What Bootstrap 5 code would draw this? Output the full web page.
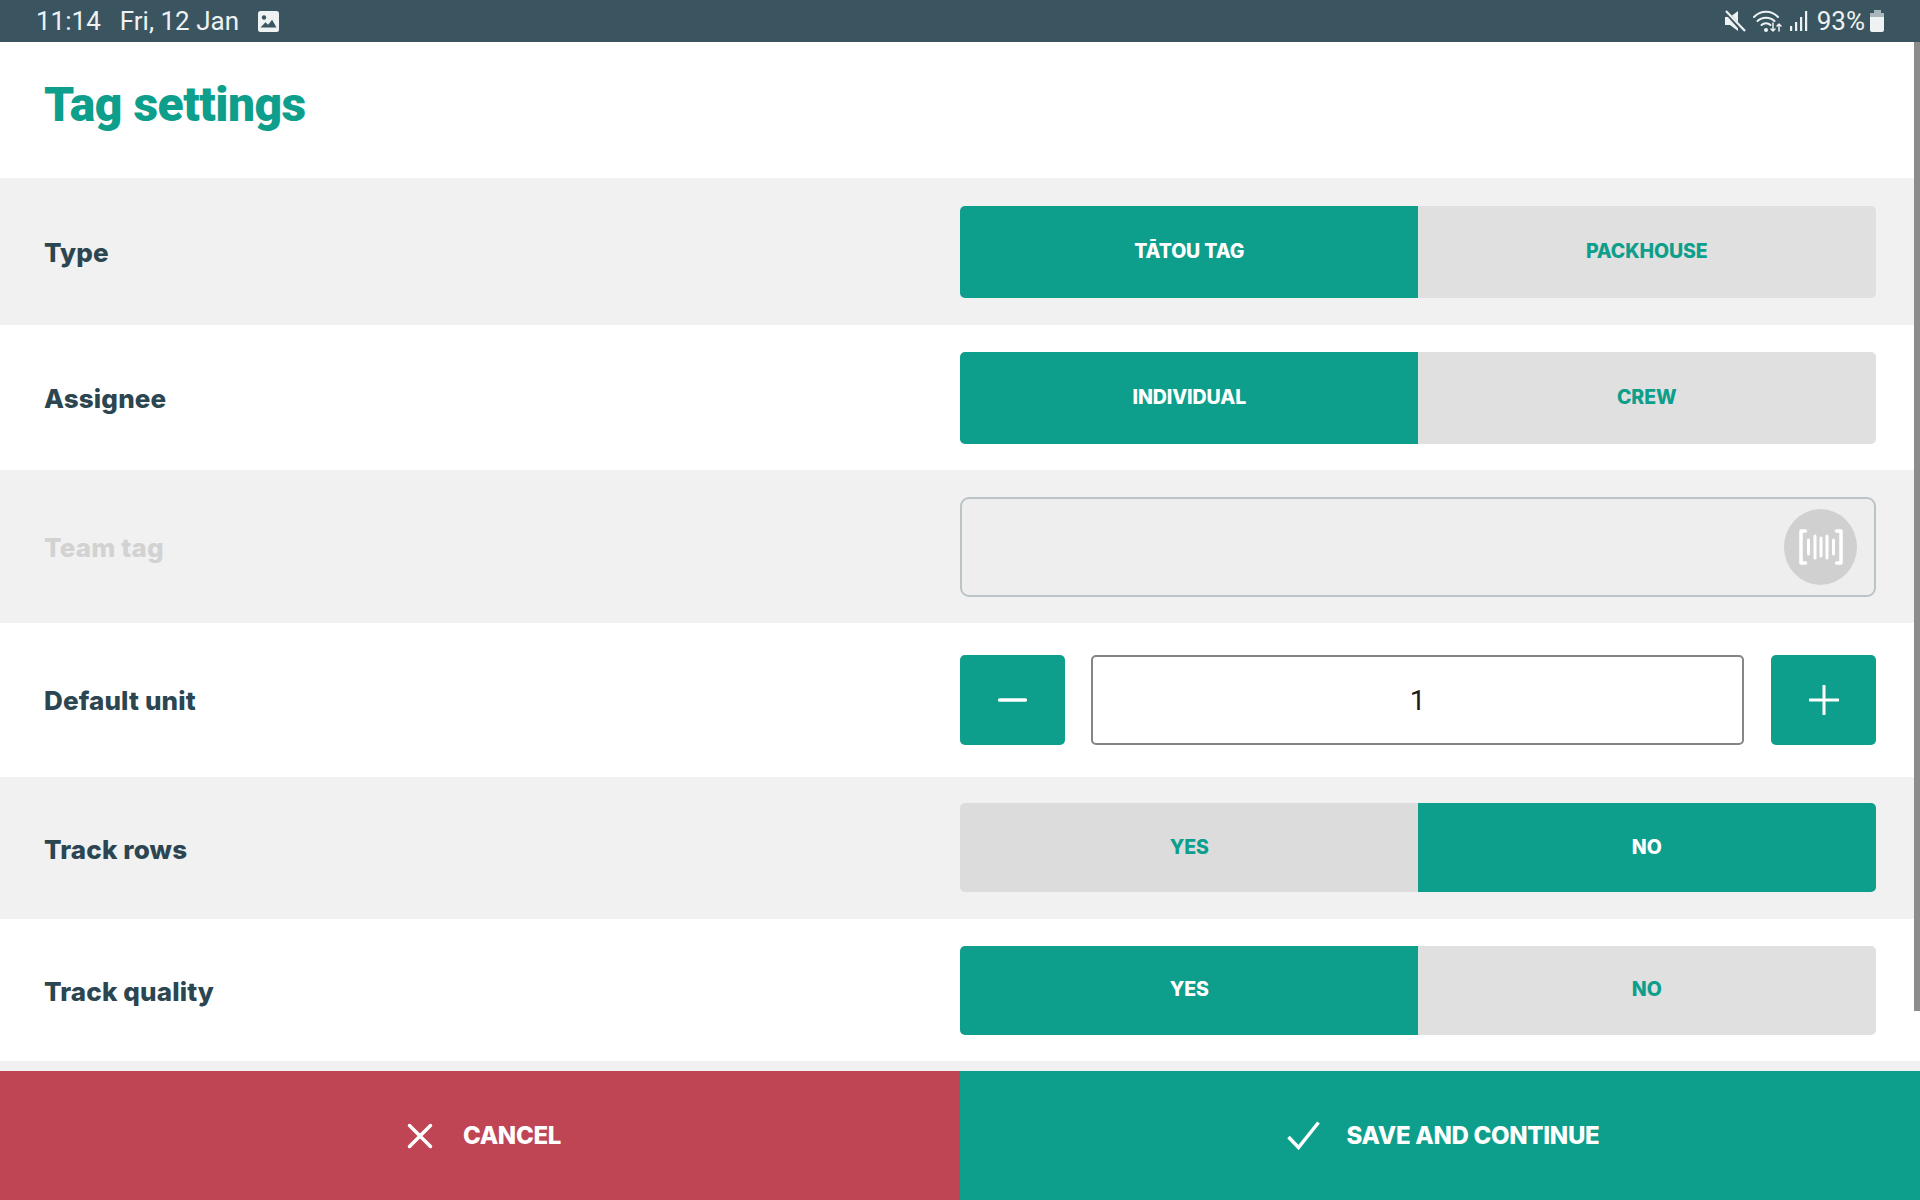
<!DOCTYPE html>
<html lang="en">
<head>
<meta charset="utf-8">
<title>Tag settings</title>
<link href="https://cdn.jsdelivr.net/npm/bootstrap@5.3.0/dist/css/bootstrap.min.css" rel="stylesheet">
<style>
html,body{height:100%;margin:0;overflow:hidden;background:#fff}
.tag-page{height:1200px;position:relative;font-family:"Inter","Liberation Sans",sans-serif}
.status-strip{height:42px;background:#3b5560;color:#eef2f3;font-family:Roboto,sans-serif;font-size:26px;line-height:42px;padding:0 36px}
.status-strip svg{display:block;flex:none}
.status-date{margin-left:19px}
.status-pic{margin-left:19px}
.status-right{margin-right:3px}
.title-zone{height:136px;padding:0 0 11px 44px}
.title-zone h1{margin:0;color:#0e9e8c;font-family:Roboto,sans-serif;font-weight:900;font-size:48px;letter-spacing:-.5px;line-height:1}
.set-row.shade{background:#f1f1f1}
.set-label{padding-left:44px;padding-top:2px;color:#2b4651;font-weight:800;font-size:26px;letter-spacing:.15px}
.set-label.off{color:#d2d2d2;padding-top:1px}
.set-ctrl{padding-right:44px}
.h-147{height:147px}.h-145{height:145px}.h-153{height:153px}.h-154{height:154px}.h-142{height:142px}
.seg{width:100%}
.seg .btn{flex:1 1 50%;border:0;border-radius:5px;font-weight:800;font-size:19.5px;letter-spacing:-.1px;padding:0;display:flex;align-items:center;justify-content:center}
.seg-92{height:92px}.seg-90{height:89px}
.seg-up{margin-bottom:1px}
.seg .pick{background:#0e9e8c;color:#fff}
.seg .rest{background:#e0e0e0;color:#0e9e8c}
.seg .rest.dim{background:#dcdcdc}
.scan-box{height:100px;background:#eee;border:2px solid #bcc3c6;border-radius:9px;padding-right:17px}
.scan-dot{width:73px;height:76px;border-radius:50%;background:#d0d0d0}
.step-btn{width:105px;height:90px;flex:none;background:#0e9e8c;border:0;border-radius:5px;padding:0}
.step-val{flex:1;width:auto;min-width:0;height:90px;margin:0 27px 0 26px;border:2px solid #858585;border-radius:5px;color:#1a1a1a;font-family:Roboto,sans-serif;font-size:28px;text-align:center;box-shadow:none}
.gap-strip{height:10px;background:#f1f1f1}
.foot-bar{height:129px}
.foot-btn{flex:1 1 50%;border:0;border-radius:0;color:#fff;font-weight:800;font-size:24px;letter-spacing:-.3px;padding:0 0 0 8px;gap:30px;display:flex;align-items:center;justify-content:center}
.foot-btn:hover,.foot-btn:active{color:#fff}
.foot-cancel,.foot-cancel:hover{background:#bf4454}
.foot-save,.foot-save:hover{background:#0e9e8c;gap:27px;padding-left:6px}
.scroll-thumb{position:absolute;top:42px;right:0;width:6px;height:969px;background:#8c8c8c}
</style>
</head>
<body>
<div class="tag-page d-flex flex-column">
  <div class="status-strip d-flex align-items-center">
    <span>11:14</span>
    <span class="status-date">Fri, 12 Jan</span>
    <svg class="status-pic" width="21" height="21" viewBox="0 0 21 21"><rect width="21" height="21" rx="2.5" fill="#eef2f3"/><circle cx="6" cy="6.5" r="2.200" fill="#3b5560"/><path d="M2.500 16.500l5-5.200 2.600 2.400 4-5 4.400 7.800z" fill="#3b5560"/></svg>
    <div class="ms-auto d-flex align-items-center status-right">
      <svg width="22" height="24" viewBox="0 0 22 24"><path d="M1 8h5l8-6v20l-8-6H1z" fill="#eef2f3"/><path d="M2 3l18 20" stroke="#3b5560" stroke-width="4"/><path d="M2 2l19 20" stroke="#eef2f3" stroke-width="2.200"/></svg>
      <svg style="margin-left:7px" width="30" height="24" viewBox="0 0 30 24" fill="none" stroke="#eef2f3" stroke-width="2" stroke-linecap="round"><path d="M1 8c6.500-7 17.500-7 24 0"/><path d="M4.500 12c4.500-4.500 12.500-4.500 17 0"/><path d="M8.500 16c2.500-2.500 6.500-2.500 9 0"/><circle cx="13" cy="21" r="1"/><path d="M20 14v8M18 20l2 2 2-2M26 22v-7M24 17l2-2 2 2" stroke-width="1.500"/></svg>
      <svg width="20" height="22" viewBox="0 0 20 22" fill="#eef2f3" style="margin-left:6px"><rect x="1" y="16" width="2.200" height="5"/><rect x="6" y="12" width="2.200" height="9"/><rect x="11" y="7" width="2.200" height="14"/><rect x="16" y="1" width="2.200" height="20"/></svg>
      <span style="margin-left:8px">93%</span>
      <svg width="15" height="22" viewBox="0 0 15 22" style="margin:0 -4px 0 5px"><rect x="4" y="0" width="7" height="3" fill="#a9b6bb"/><rect x="0" y="3" width="14" height="5" fill="#a9b6bb"/><path d="M0 7h14v13a2 2 0 0 1-2 2H2a2 2 0 0 1-2-2z" fill="#eef2f3"/></svg>
    </div>
  </div>

  <div class="title-zone d-flex align-items-center"><h1>Tag settings</h1></div>

  <div class="row g-0 set-row shade h-147 align-items-center">
    <div class="col-6 set-label">Type</div>
    <div class="col-6 set-ctrl"><div class="btn-group seg seg-92" role="group"><button class="btn pick">TĀTOU TAG</button><button class="btn rest">PACKHOUSE</button></div></div>
  </div>
  <div class="row g-0 set-row h-145 align-items-center">
    <div class="col-6 set-label">Assignee</div>
    <div class="col-6 set-ctrl"><div class="btn-group seg seg-92" role="group"><button class="btn pick">INDIVIDUAL</button><button class="btn rest">CREW</button></div></div>
  </div>
  <div class="row g-0 set-row shade h-153 align-items-center">
    <div class="col-6 set-label off">Team tag</div>
    <div class="col-6 set-ctrl">
      <div class="scan-box d-flex align-items-center justify-content-end">
        <div class="scan-dot d-flex align-items-center justify-content-center">
          <svg width="44" height="36" viewBox="0 0 44 36" fill="none" stroke="#fff" stroke-width="3.500" stroke-linecap="round" stroke-linejoin="round"><path d="M6.500 2H2v32h4.500M37.500 2H42v32h-4.500"/><path d="M9.500 11v14M16 7v22M22 9v18M28 7v22M34.500 11v14" stroke-width="3"/></svg>
        </div>
      </div>
    </div>
  </div>
  <div class="row g-0 set-row h-154 align-items-center">
    <div class="col-6 set-label pt-0">Default unit</div>
    <div class="col-6 set-ctrl d-flex">
      <button class="step-btn d-flex align-items-center justify-content-center" aria-label="Decrease"><svg width="30" height="4" viewBox="0 0 30 4"><rect width="29" height="3.500" y=".25" rx="1.500" fill="#fff"/></svg></button>
      <input class="form-control step-val" value="1" aria-label="Default unit">
      <button class="step-btn d-flex align-items-center justify-content-center" aria-label="Increase"><svg width="30" height="30" viewBox="0 0 30 30"><path d="M15 1v28M1 15h28" stroke="#fff" stroke-width="3" stroke-linecap="round"/></svg></button>
    </div>
  </div>
  <div class="row g-0 set-row shade h-142 align-items-center">
    <div class="col-6 set-label">Track rows</div>
    <div class="col-6 set-ctrl"><div class="btn-group seg seg-90 seg-up" role="group"><button class="btn rest dim">YES</button><button class="btn pick">NO</button></div></div>
  </div>
  <div class="row g-0 set-row h-142 align-items-center">
    <div class="col-6 set-label">Track quality</div>
    <div class="col-6 set-ctrl"><div class="btn-group seg seg-90" role="group"><button class="btn pick">YES</button><button class="btn rest">NO</button></div></div>
  </div>
  <div class="gap-strip"></div>
  <div class="foot-bar d-flex">
    <button class="btn foot-btn foot-cancel"><svg width="26" height="26" viewBox="0 0 26 26"><path d="M2.500 2.500l21 21M23.500 2.500l-21 21" stroke="#fff" stroke-width="3.500" stroke-linecap="round"/></svg><span>CANCEL</span></button>
    <button class="btn foot-btn foot-save"><svg width="33" height="29" viewBox="0 0 33 29" fill="none"><path d="M1.500 16l10 10.500L31.500 1.500" stroke="#fff" stroke-width="3.500"/></svg><span>SAVE AND CONTINUE</span></button>
  </div>
  <div class="scroll-thumb"></div>
</div>
<script src="https://cdn.jsdelivr.net/npm/bootstrap@5.3.0/dist/js/bootstrap.bundle.min.js"></script>
</body>
</html>
